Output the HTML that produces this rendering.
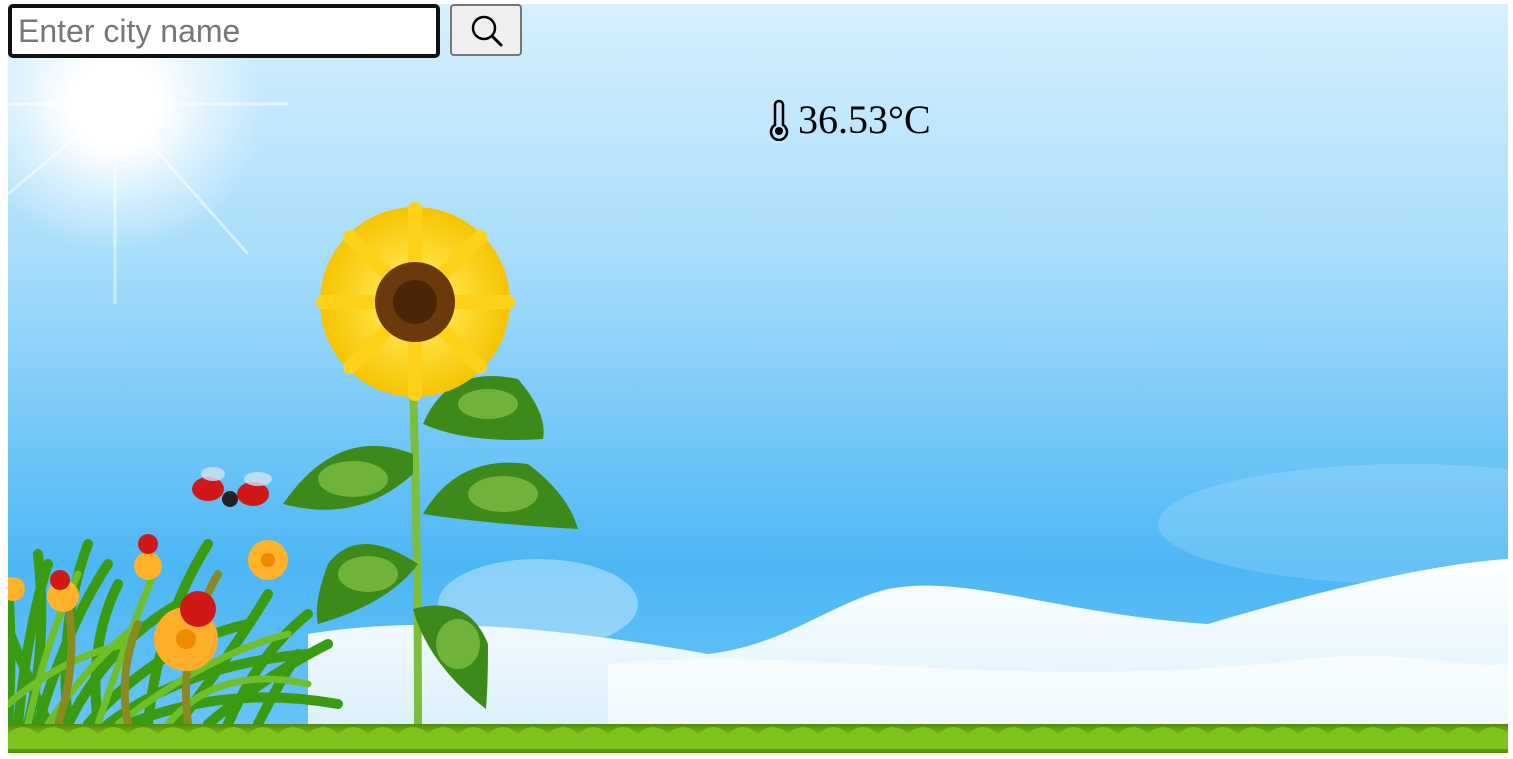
<!DOCTYPE html>
<html><head><style>
html,body{margin:0;padding:0;background:#fff;width:1513px;height:759px;overflow:hidden}
.bg{position:absolute;left:8px;top:4px;width:1500px;height:749px}
input{position:absolute;left:8px;top:4px;width:432px;height:54px;box-sizing:border-box;border:4px solid #111;border-radius:5px;font:32px "Liberation Sans",sans-serif;padding:0 6px;background:#fff;outline:none}
input::placeholder{color:#777}
.btn{position:absolute;left:450px;top:4px;width:72px;height:52px;box-sizing:border-box;border:2px solid #777;border-radius:4px;background:#efefef}
.t{position:absolute;left:766px;top:96px;font:40px "Liberation Serif",serif;color:#000;display:flex;align-items:center}
</style></head><body>
<svg class="bg" viewBox="0 0 1500 749" preserveAspectRatio="none">
<defs>
<linearGradient id="sky" x1="0" y1="0" x2="0" y2="1">
<stop offset="0" stop-color="#d6f0fd"/><stop offset=".35" stop-color="#a6dcfb"/><stop offset=".75" stop-color="#4cb7f5"/><stop offset="1" stop-color="#6cc5f6"/></linearGradient>
<radialGradient id="sun" cx="107" cy="100" r="150" gradientUnits="userSpaceOnUse">
<stop offset="0" stop-color="#fff"/><stop offset=".3" stop-color="#fff"/><stop offset=".6" stop-color="#fff" stop-opacity=".5"/><stop offset="1" stop-color="#fff" stop-opacity="0"/></radialGradient>
<linearGradient id="cl" x1="0" y1="0" x2="0" y2="1"><stop offset="0" stop-color="#fff"/><stop offset="1" stop-color="#d6eefc"/></linearGradient>
<linearGradient id="gr" x1="0" y1="0" x2="0" y2="1"><stop offset="0" stop-color="#4f8a0d"/><stop offset=".5" stop-color="#8fd01a"/><stop offset="1" stop-color="#4f8a0d"/></linearGradient>
<radialGradient id="pet" cx=".5" cy=".5" r=".5"><stop offset=".4" stop-color="#ffe040"/><stop offset="1" stop-color="#f6c400"/></radialGradient>
</defs>
<rect width="1500" height="749" fill="url(#sky)"/>
<circle cx="107" cy="100" r="160" fill="url(#sun)"/>
<path d="M0 190 L107 100 L240 250 M107 100 L107 300 M0 100 L280 100" stroke="#fff" stroke-opacity=".5" stroke-width="3" fill="none"/>
<ellipse cx="530" cy="600" rx="100" ry="45" fill="#fff" opacity=".35"/>
<ellipse cx="1400" cy="520" rx="250" ry="60" fill="#fff" opacity=".15"/>
<path d="M300 630 C420 610 560 625 700 650 C780 640 820 600 880 585 C960 570 1050 610 1200 620 C1300 590 1420 560 1500 555 L1500 749 L300 749 Z" fill="url(#cl)"/>
<path d="M600 660 C800 640 1000 690 1300 655 C1400 645 1450 665 1500 660 L1500 749 L600 749Z" fill="#fff" opacity=".6"/>
<!-- bush -->
<g stroke-linecap="round" fill="none">
<path d="M10 720 Q20 620 40 560 M30 720 Q60 620 100 560 M60 720 Q100 640 170 600 M80 720 Q150 640 240 620 M100 720 Q180 660 300 650 M120 720 Q220 680 330 700 M40 720 Q10 650 -10 600 M20 720 Q40 640 30 550 M140 720 Q150 620 200 540 M170 720 Q230 640 260 590 M200 720 Q260 670 320 640 M60 720 Q50 620 80 540 M250 720 Q270 680 290 650 M0 720 Q5 650 0 580 M90 720 Q80 640 110 580 M220 720 Q250 650 300 610" stroke="#3a9a12" stroke-width="10"/>
<path d="M20 720 Q40 630 70 570 M90 720 Q120 630 150 560 M110 720 Q200 650 280 630 M160 720 Q210 660 300 680 M0 700 Q60 650 120 640 M40 720 Q80 660 130 620" stroke="#6fbf2a" stroke-width="7"/>
<path d="M50 720 Q70 660 60 600 M180 720 Q170 640 210 570 M120 720 Q110 670 130 620" stroke="#8a8a20" stroke-width="8"/>
</g>
<circle cx="260" cy="556" r="20" fill="#ffb22a"/><circle cx="260" cy="556" r="7" fill="#f08a00"/>
<circle cx="178" cy="635" r="32" fill="#ffae2a"/><circle cx="178" cy="635" r="10" fill="#f08a00"/>
<circle cx="140" cy="562" r="14" fill="#ffb22a"/><circle cx="55" cy="592" r="16" fill="#ffb22a"/><circle cx="5" cy="585" r="12" fill="#ffb22a"/>
<circle cx="190" cy="605" r="18" fill="#d01818"/><circle cx="140" cy="540" r="10" fill="#d01818"/><circle cx="52" cy="576" r="10" fill="#d01818"/>
<ellipse cx="200" cy="485" rx="16" ry="12" fill="#d01818"/><ellipse cx="245" cy="490" rx="16" ry="12" fill="#d01818"/><circle cx="222" cy="495" r="8" fill="#222"/>
<ellipse cx="205" cy="470" rx="12" ry="7" fill="#cfe3ee" opacity=".8"/><ellipse cx="250" cy="475" rx="14" ry="7" fill="#cfe3ee" opacity=".8"/>
<!-- sunflower -->
<path d="M405 380 Q410 550 410 720" stroke="#7cbf3c" stroke-width="8" fill="none"/>
<g fill="#3d8a1a">
<path d="M405 450 Q330 420 275 500 Q350 520 405 470Z"/>
<path d="M415 420 Q440 360 510 375 Q540 410 535 435 Q460 440 415 420Z"/>
<path d="M415 510 Q450 450 520 460 Q560 490 570 525 Q480 520 415 510Z"/>
<path d="M410 560 Q350 520 320 560 Q305 600 310 620 Q380 600 410 560Z"/>
<path d="M405 605 Q460 590 480 640 Q480 680 478 705 Q420 660 405 605Z"/>
</g>
<g fill="#86c44a" opacity=".7">
<ellipse cx="345" cy="475" rx="35" ry="18"/><ellipse cx="480" cy="400" rx="30" ry="15"/><ellipse cx="495" cy="490" rx="35" ry="18"/><ellipse cx="360" cy="570" rx="30" ry="18"/><ellipse cx="450" cy="640" rx="22" ry="25"/>
</g>
<circle cx="407" cy="298" r="95" fill="url(#pet)"/>
<g stroke="#ffd21a" stroke-width="14" stroke-linecap="round">
<path d="M407 205 L407 390 M315 298 L500 298 M342 233 L472 363 M342 363 L472 233"/>
</g>
<circle cx="407" cy="298" r="40" fill="#6b3a0c"/><circle cx="407" cy="298" r="22" fill="#4a2606"/>
<!-- grass -->
<rect x="0" y="720" width="1500" height="29" fill="url(#gr)"/>
<path d="M0 730 q15 -14 30 0 q15 -14 30 0 q15 -14 30 0 q15 -14 30 0 q15 -14 30 0 q15 -14 30 0 q15 -14 30 0 q15 -14 30 0 q15 -14 30 0 q15 -14 30 0 q15 -14 30 0 q15 -14 30 0 q15 -14 30 0 q15 -14 30 0 q15 -14 30 0 q15 -14 30 0 q15 -14 30 0 q15 -14 30 0 q15 -14 30 0 q15 -14 30 0 q15 -14 30 0 q15 -14 30 0 q15 -14 30 0 q15 -14 30 0 q15 -14 30 0 q15 -14 30 0 q15 -14 30 0 q15 -14 30 0 q15 -14 30 0 q15 -14 30 0 q15 -14 30 0 q15 -14 30 0 q15 -14 30 0 q15 -14 30 0 q15 -14 30 0 q15 -14 30 0 q15 -14 30 0 q15 -14 30 0 q15 -14 30 0 q15 -14 30 0 q15 -14 30 0 q15 -14 30 0 q15 -14 30 0 q15 -14 30 0 q15 -14 30 0 q15 -14 30 0 q15 -14 30 0 q15 -14 30 0 q15 -14 30 0 q15 -14 30 0 L1500 745 L0 745Z" fill="#7ec41a"/>
</svg>
<input placeholder="Enter city name">
<div class="btn"><svg width="68" height="48" viewBox="0 0 68 48"><circle cx="32" cy="22" r="11" stroke="#000" stroke-width="2.5" fill="none"/><path d="M40 30 L49 39" stroke="#000" stroke-width="3" stroke-linecap="round"/></svg></div>
<div class="t"><svg width="26" height="42" viewBox="0 0 26 42" style="margin-right:6px"><path d="M9 6 a4 4 0 0 1 8 0 v20 a8 8 0 1 1 -8 0 Z" fill="none" stroke="#000" stroke-width="2.5"/><circle cx="13" cy="32" r="4" fill="#000"/></svg>36.53°C</div>
</body></html>
